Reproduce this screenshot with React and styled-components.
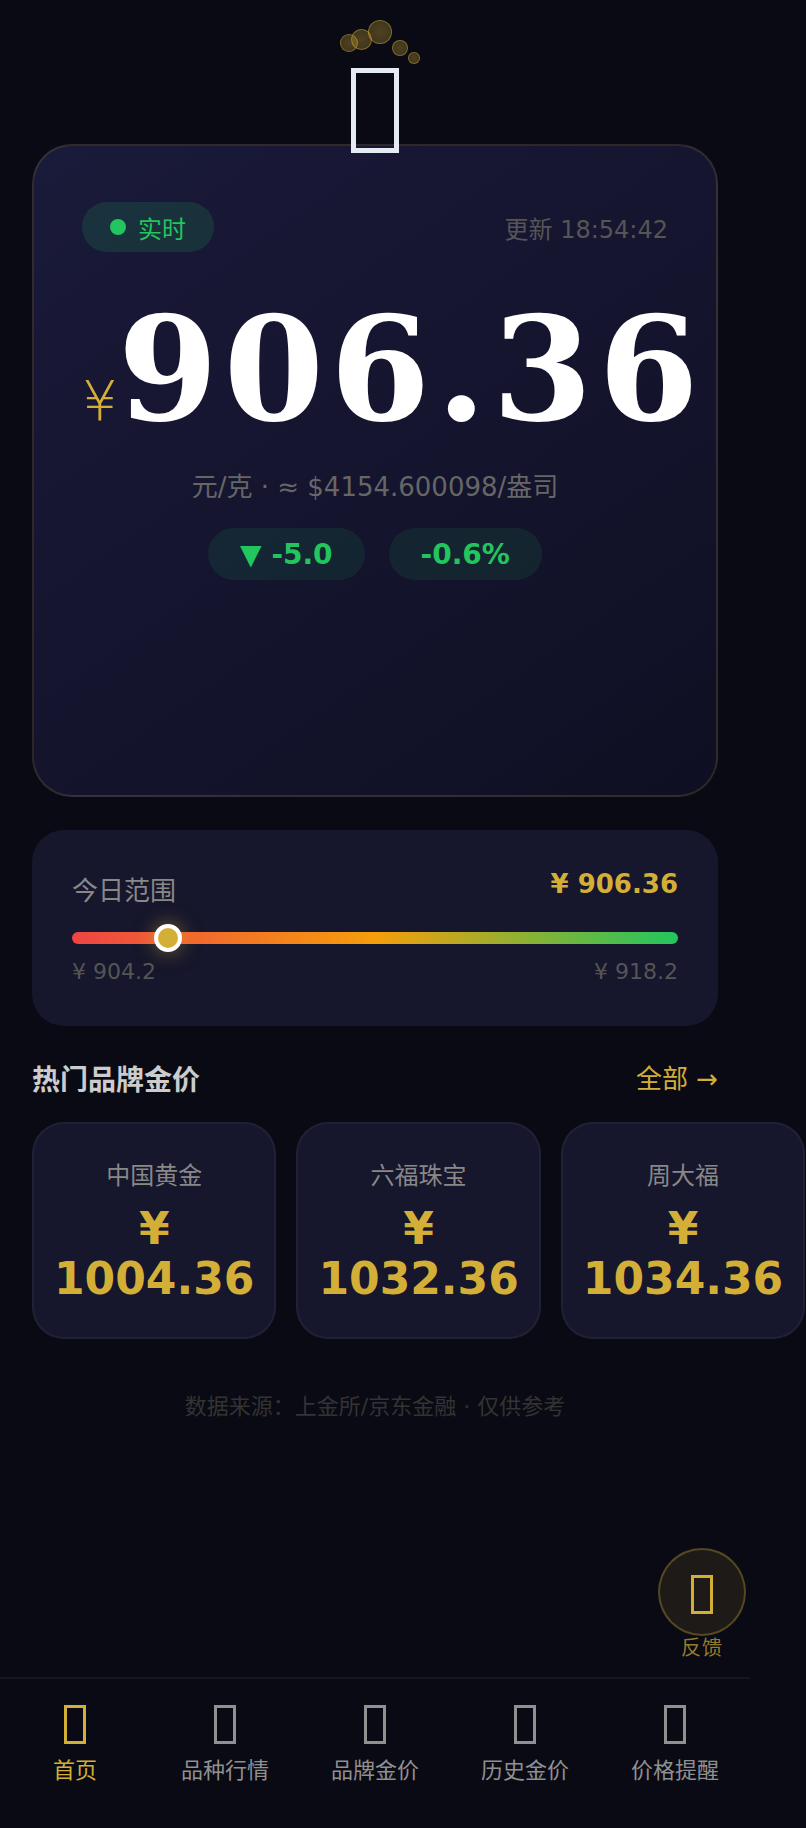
import React from "react";
import styled, { createGlobalStyle } from "styled-components";

const GOLD = "#d4af37";
const GREEN = "#22c55e";
const SANS = `"DejaVu Sans", "Noto Sans CJK SC", sans-serif`;

const Global = createGlobalStyle`
  html, body {
    margin: 0;
    padding: 0;
    background: #0a0a14;
    overflow: hidden;
  }
  * { box-sizing: border-box; }
`;

const brands = [
  { name: "中国黄金", price: "1004.36" },
  { name: "六福珠宝", price: "1032.36" },
  { name: "周大福", price: "1034.36" },
];

const tabs = [
  { label: "首页", active: true },
  { label: "品种行情" },
  { label: "品牌金价" },
  { label: "历史金价" },
  { label: "价格提醒" },
];

const bubbles = [
  { x: 340, y: 34, d: 18 },
  { x: 351, y: 29, d: 21 },
  { x: 368, y: 20, d: 24 },
  { x: 392, y: 40, d: 16 },
  { x: 408, y: 52, d: 12 },
];

function App() {
  return (
    <Page>
      <Global />
      <Header>
        {bubbles.map((b) => (
          <Bubble key={b.x} style={{ left: b.x, top: b.y, width: b.d, height: b.d }} />
        ))}
        <LogoGlyph />
      </Header>

      <Main>
        <Hero>
          <HeroTop>
            <LiveBadge>
              <Dot />
              实时
            </LiveBadge>
            <Updated>更新 18:54:42</Updated>
          </HeroTop>
          <PriceRow>
            <Currency>¥</Currency>
            <BigPrice>906.36</BigPrice>
          </PriceRow>
          <Unit>元/克 · ≈ $4154.600098/盎司</Unit>
          <Changes>
            <ChangePill>▼ -5.0</ChangePill>
            <ChangePill>-0.6%</ChangePill>
          </Changes>
        </Hero>

        <RangeCard>
          <RangeHead>
            <RangeTitle>今日范围</RangeTitle>
            <RangeValue>¥ 906.36</RangeValue>
          </RangeHead>
          <Track>
            <Thumb />
          </Track>
          <RangeEnds>
            <span>¥ 904.2</span>
            <span>¥ 918.2</span>
          </RangeEnds>
        </RangeCard>

        <SectionHead>
          <SectionTitle>热门品牌金价</SectionTitle>
          <MoreLink>全部 →</MoreLink>
        </SectionHead>

        <BrandRow>
          {brands.map((b) => (
            <BrandCard key={b.name}>
              <BrandName>{b.name}</BrandName>
              <BrandPrice>¥ {b.price}</BrandPrice>
            </BrandCard>
          ))}
        </BrandRow>

        <Source>数据来源：上金所/京东金融 · 仅供参考</Source>
      </Main>

      <Feedback>
        <FeedbackCircle>
          <SmallGlyph />
        </FeedbackCircle>
        <FeedbackLabel>反馈</FeedbackLabel>
      </Feedback>

      <TabBar>
        {tabs.map((t) => (
          <Tab key={t.label} $active={t.active}>
            <SmallGlyph />
            <TabLabel>{t.label}</TabLabel>
          </Tab>
        ))}
      </TabBar>
    </Page>
  );
}

const Page = styled.div`
  position: relative;
  width: 750px;
  height: 1828px;
  font-family: ${SANS};
  color: #fff;
`;

const Header = styled.header`
  position: relative;
  z-index: 2;
  height: 144px;
  padding-top: 68px;
  display: flex;
  justify-content: center;
  align-items: flex-start;
`;

// emoji that did not load: an empty box where the glyph should be
const LogoGlyph = styled.i`
  flex: none;
  width: 48px;
  height: 85px;
  border: 5px solid #e6eaf3;
`;

const SmallGlyph = styled.i`
  flex: none;
  display: block;
  width: 22px;
  height: 39px;
  border: 3px solid currentColor;
`;

const Bubble = styled.i`
  position: absolute;
  border-radius: 50%;
  background: radial-gradient(circle, rgba(212, 175, 55, 0.34), rgba(212, 175, 55, 0.24));
  border: 1.5px solid rgba(212, 175, 55, 0.45);
`;

const Main = styled.main`
  padding: 0 32px;
`;

const Hero = styled.section`
  height: 653px;
  padding: 56px 48px;
  border: 2px solid rgba(212, 175, 55, 0.15);
  border-radius: 40px;
  background: linear-gradient(145deg, #1a1a3a 0%, #0f0f23 100%);
`;

const HeroTop = styled.div`
  display: flex;
  align-items: center;
  justify-content: space-between;
`;

const LiveBadge = styled.div`
  display: flex;
  align-items: center;
  gap: 12px;
  height: 50px;
  padding: 0 28px;
  border-radius: 25px;
  background: rgba(34, 197, 94, 0.15);
  color: ${GREEN};
  font-size: 24px;
`;

const Dot = styled.i`
  width: 16px;
  height: 16px;
  border-radius: 50%;
  background: ${GREEN};
`;

const Updated = styled.div`
  font-size: 24px;
  color: #555;
`;

const PriceRow = styled.div`
  display: flex;
  align-items: baseline;
  margin-top: 33px;
  height: 161px;
  white-space: nowrap;
`;

const Currency = styled.span`
  font-size: 56px;
  font-weight: 200;
  color: ${GOLD};
`;

const BigPrice = styled.span`
  font-family: "DejaVu Serif", serif;
  font-size: 144px;
  font-weight: 700;
  letter-spacing: 6px;
  color: #fff;
`;

const Unit = styled.div`
  margin-top: 23px;
  text-align: center;
  font-size: 26px;
  line-height: 36px;
  color: #666;
`;

const Changes = styled.div`
  display: flex;
  justify-content: center;
  gap: 24px;
  margin-top: 23px;
`;

const ChangePill = styled.div`
  height: 52px;
  padding: 0 32px;
  border-radius: 26px;
  display: flex;
  align-items: center;
  background: rgba(34, 197, 94, 0.1);
  color: ${GREEN};
  font-size: 28px;
  font-weight: 700;
`;

const RangeCard = styled.section`
  margin-top: 33px;
  height: 196px;
  padding: 40px;
  border-radius: 32px;
  background: #16162c;
`;

const RangeHead = styled.div`
  display: flex;
  justify-content: space-between;
  align-items: flex-start;
  height: 38px;
`;

const RangeTitle = styled.div`
  font-size: 26px;
  line-height: 42px;
  color: #888;
`;

const RangeValue = styled.div`
  font-size: 26px;
  line-height: 28px;
  font-weight: 700;
  color: ${GOLD};
`;

const Track = styled.div`
  position: relative;
  margin-top: 24px;
  height: 12px;
  border-radius: 6px;
  background: linear-gradient(90deg, #ef4444, #f59e0b, #22c55e);
`;

const Thumb = styled.i`
  position: absolute;
  left: 15.84%;
  top: 50%;
  width: 28px;
  height: 28px;
  border-radius: 50%;
  border: 4px solid #fff;
  background: ${GOLD};
  transform: translate(-50%, -50%);
  box-shadow: 0 0 20px rgba(212, 175, 55, 0.5);
`;

const RangeEnds = styled.div`
  display: flex;
  justify-content: space-between;
  margin-top: 15px;
  font-size: 22px;
  line-height: 26px;
  color: #555;
`;

const SectionHead = styled.div`
  display: flex;
  justify-content: space-between;
  align-items: center;
  margin-top: 32px;
`;

const SectionTitle = styled.h2`
  margin: 0;
  font-size: 28px;
  font-weight: 700;
  color: #ccc;
`;

const MoreLink = styled.div`
  margin-bottom: 3px;
  font-size: 26px;
  color: ${GOLD};
`;

const BrandRow = styled.div`
  display: flex;
  gap: 20px;
  margin-top: 24px;
`;

const BrandCard = styled.div`
  flex: 0 0 244px;
  height: 217px;
  padding: 32px 20px;
  border: 2px solid rgba(255, 255, 255, 0.05);
  border-radius: 32px;
  background: #16162c;
  text-align: center;
`;

const BrandName = styled.div`
  font-size: 24px;
  color: #888;
`;

const BrandPrice = styled.div`
  margin-top: 13px;
  font-size: 44px;
  line-height: 50px;
  font-weight: 700;
  color: ${GOLD};
`;

const Source = styled.div`
  margin-top: 49px;
  text-align: center;
  font-size: 22px;
  color: #333;
`;

const Feedback = styled.div`
  position: absolute;
  left: 658px;
  top: 1548px;
  width: 88px;
  display: flex;
  flex-direction: column;
  align-items: center;
`;

const FeedbackCircle = styled.div`
  width: 88px;
  height: 88px;
  border-radius: 50%;
  padding-top: 4px;
  display: flex;
  align-items: center;
  justify-content: center;
  border: 2px solid rgba(212, 175, 55, 0.3);
  background: rgba(212, 175, 55, 0.1);
  color: ${GOLD};
`;

const FeedbackLabel = styled.div`
  font-size: 20px;
  letter-spacing: 1px;
  line-height: 24px;
  color: rgba(212, 175, 55, 0.7);
`;

const TabBar = styled.nav`
  position: absolute;
  left: 0;
  right: 0;
  bottom: 0;
  height: 151px;
  display: grid;
  grid-template-columns: repeat(5, 1fr);
  padding-top: 26px;
  border-top: 2px solid rgba(255, 255, 255, 0.05);
  background: #0a0a14;
`;

const Tab = styled.div`
  display: flex;
  flex-direction: column;
  align-items: center;
  color: ${(p) => (p.$active ? GOLD : "#909090")};
`;

const TabLabel = styled.span`
  margin-top: 11px;
  font-size: 22px;
  line-height: 32px;
`;

export default App;
